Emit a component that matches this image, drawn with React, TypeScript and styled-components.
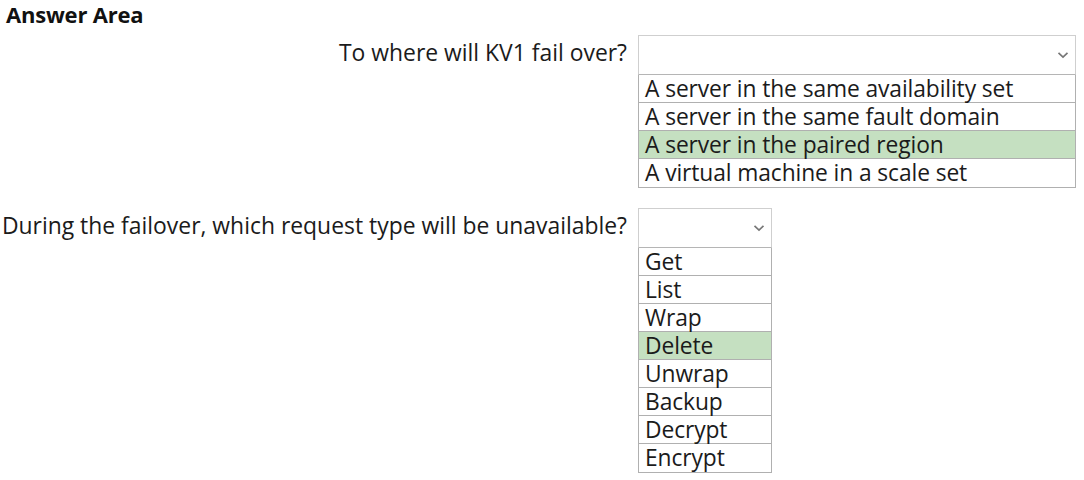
import React from "react";
import styled, { createGlobalStyle } from "styled-components";

const Global = createGlobalStyle`
  html, body { margin: 0; padding: 0; background: #ffffff; }
  body { font-family: "Open Sans", "Noto Sans", sans-serif; color: #1b1b1b; }
`;

const Page = styled.div`
  width: 1084px;
  height: 480px;
  overflow: hidden;
`;

const Title = styled.h1`
  margin: 0;
  padding: 1px 0 0 6px;
  font-size: 22px;
  font-weight: 700;
  line-height: 27px;
  color: #111111;
  letter-spacing: -0.2px;
`;

const Questions = styled.div`
  display: grid;
  grid-template-columns: 627px 1fr;
  column-gap: 11px;
  row-gap: 20px;
  margin-top: 7px;
`;

const Label = styled.div`
  text-align: right;
  font-size: 22.9px;
  line-height: 28px;
  padding-top: 4px;
  white-space: nowrap;
`;

const Dropdown = styled.div<{ $width: number }>`
  width: ${(p) => p.$width}px;
  display: flex;
  flex-direction: column;
`;

const SelectBox = styled.div`
  box-sizing: border-box;
  height: 40px;
  border: 1px solid #cfcfcf;
  border-bottom-color: #b5b5b5;
  display: flex;
  align-items: center;
  justify-content: flex-end;
  padding-right: 6px;
`;

const Options = styled.ul`
  list-style: none;
  margin: 0;
  padding: 0;
  border: 1px solid #b0b0b0;
  border-top: none;
`;

const Option = styled.li<{ $selected?: boolean }>`
  box-sizing: border-box;
  height: 28px;
  padding-left: 6px;
  font-size: 22.8px;
  line-height: 27px;
  white-space: nowrap;
  letter-spacing: -0.1px;
  border-bottom: 1px solid #b0b0b0;
  background: ${(p) => (p.$selected ? "#c5e0c1" : "#ffffff")};
  &:last-child {
    border-bottom: none;
  }
`;

const Chevron = () => (
  <svg width="12" height="8" viewBox="0 0 12 8" aria-hidden="true">
    <path d="M1.5 1.8 L6 6 L10.5 1.8" fill="none" stroke="#777777" strokeWidth="1.7" />
  </svg>
);

type Q = { label: string; width: number; options: string[]; selected: number };

const questions: Q[] = [
  {
    label: "To where will KV1 fail over?",
    width: 438,
    options: [
      "A server in the same availability set",
      "A server in the same fault domain",
      "A server in the paired region",
      "A virtual machine in a scale set",
    ],
    selected: 2,
  },
  {
    label: "During the failover, which request type will be unavailable?",
    width: 134,
    options: ["Get", "List", "Wrap", "Delete", "Unwrap", "Backup", "Decrypt", "Encrypt"],
    selected: 3,
  },
];

export default function App() {
  return (
    <Page>
      <Global />
      <Title>Answer Area</Title>
      <Questions>
        {questions.map((q) => (
          <React.Fragment key={q.label}>
            <Label>{q.label}</Label>
            <Dropdown $width={q.width}>
              <SelectBox>
                <Chevron />
              </SelectBox>
              <Options>
                {q.options.map((o, i) => (
                  <Option key={o} $selected={i === q.selected}>
                    {o}
                  </Option>
                ))}
              </Options>
            </Dropdown>
          </React.Fragment>
        ))}
      </Questions>
    </Page>
  );
}
